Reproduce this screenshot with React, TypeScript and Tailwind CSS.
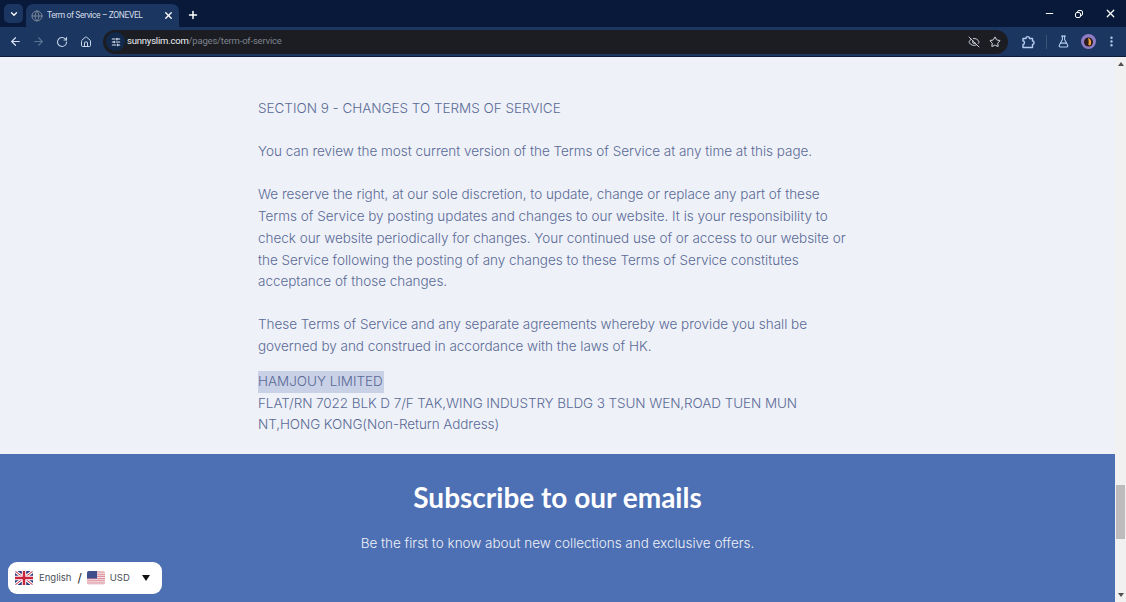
import React from "react";
import { ArrowLeft, ArrowRight, RotateCw, Home, X, Plus, ChevronDown, Star, EyeOff, FlaskConical, EllipsisVertical, Minus, SlidersHorizontal, Globe } from "lucide-react";

const lines = (a: string[]) => a.map((l, i) => <div key={i}>{l}</div>);

function UK() {
  return (
    <svg width="18" height="14" viewBox="0 0 18 14" className="rounded-[2px]">
      <rect width="18" height="14" fill="#2b3a7a" />
      <path d="M0 0L18 14M18 0L0 14" stroke="#fff" strokeWidth="3" />
      <path d="M0 0L18 14M18 0L0 14" stroke="#c8243c" strokeWidth="1" />
      <path d="M9 0V14M0 7H18" stroke="#fff" strokeWidth="4.5" />
      <path d="M9 0V14M0 7H18" stroke="#c8243c" strokeWidth="2.5" />
    </svg>
  );
}
function US() {
  return (
    <svg width="18" height="14" viewBox="0 0 18 14" className="rounded-[2px]">
      <rect width="18" height="14" fill="#f3e3e6" />
      <path d="M0 1H18M0 3.2H18M0 5.4H18M0 7.6H18M0 9.8H18M0 12H18" stroke="#dd8e9a" strokeWidth="1.1" />
      <rect width="10" height="7.5" fill="#3f4f8c" />
    </svg>
  );
}
function ExtIcon() {
  return (
    <svg width="14" height="14" viewBox="0 0 14 14" fill="none" stroke="#b4cbed" strokeWidth="1.4" strokeLinejoin="round" className="ml-[13px] shrink-0">
      <path d="M2 3.5H5C5 1 8.5 1 8.5 3.5H11.5V6C13.6 6 13.6 9.5 11.5 9.5V12.5H2V9.5C4 9.5 4 6 2 6Z" />
    </svg>
  );
}
function Avatar() {
  return (
    <svg width="15" height="15" viewBox="0 0 15 15" className="ml-[11px] shrink-0">
      <circle cx="7.5" cy="7.5" r="7.5" fill="#8f7cc4" />
      <circle cx="7.5" cy="8" r="4.5" fill="#2d1c1a" />
      <path d="M7 4C10 5 11 8 9.5 11C8.5 12 7 11.5 7.5 9.5C8 8 7.5 6 7 4Z" fill="#f0a23c" />
    </svg>
  );
}

export default function App() {
  return (
    <div className="w-[1126px] h-[602px] overflow-hidden flex flex-col relative bg-[#eef1f8] font-['Liberation_Sans',sans-serif]">
      {/* Tab strip */}
      <div className="h-[27px] shrink-0 bg-[#08193a] flex items-end font-['Roboto',sans-serif]">
        <div className="w-[19px] h-[19px] ml-[4px] mb-[4px] rounded-[5px] bg-[#1a3661] flex items-center justify-center text-white">
          <ChevronDown size={10} strokeWidth={3} />
        </div>
        <div className="ml-[3px] w-[153px] h-[23px] rounded-t-[7px] bg-[#1a3661] flex items-center pl-[5px] pr-[5px] text-[#d5dce8]">
          <Globe size={12} className="text-[#7c8798] shrink-0" />
          <span className="ml-[4px] text-[8.5px] tracking-[-0.4px] whitespace-nowrap flex-1">Term of Service – ZONEVEL</span>
          <X size={11} strokeWidth={3} className="text-white shrink-0" />
        </div>
        <Plus size={12} strokeWidth={3} className="text-white ml-[8px] mb-[6px]" />
        <div className="flex-1" />
        <div className="flex items-center h-[27px] text-white">
          <Minus size={11} strokeWidth={2.5} className="mr-[20px]" />
          <div className="relative w-[8px] h-[8px] mr-[21px]">
            <div className="absolute right-0 top-0 w-[6px] h-[6px] rounded-[2px] border border-white" />
            <div className="absolute left-0 bottom-0 w-[6px] h-[6px] rounded-[2px] border-[1.5px] border-white bg-[#08193a]" />
          </div>
          <X size={13} strokeWidth={2.2} className="mr-[9px]" />
        </div>
      </div>
      {/* Toolbar */}
      <div className="h-[30px] shrink-0 bg-[#1a3661] flex items-center text-[#c9d6ea] border-b border-[#0c1c3a]">
        <ArrowLeft size={13} strokeWidth={2.2} className="ml-[9px] text-[#d4e0f2] shrink-0" />
        <ArrowRight size={13} strokeWidth={2} className="ml-[10px] text-[#5d7394] shrink-0" />
        <RotateCw size={12} strokeWidth={2.2} className="ml-[11px] shrink-0" />
        <Home size={12} strokeWidth={2} className="ml-[12px] shrink-0" />
        <div className="ml-[11px] w-[905px] shrink-0 h-[24px] rounded-full bg-[#1b1d22] flex items-center font-['Roboto',sans-serif] text-[9.5px] tracking-[-0.2px]">
          <div className="ml-[3px] w-[19px] h-[19px] rounded-full bg-[#12294c] flex items-center justify-center text-[#dbe5f3]">
            <SlidersHorizontal size={10} strokeWidth={2.5} />
          </div>
          <span className="ml-[2px] text-[#eef1f6]">sunnyslim.com</span>
          <span className="text-[#7d838d]">/pages/term-of-service</span>
          <div className="flex-1" />
          <EyeOff size={12} className="text-[#c8ccd2] mr-[9px]" />
          <Star size={12} strokeWidth={2} className="text-[#dfe3e9] mr-[7px]" />
        </div>
        <ExtIcon />
        <div className="w-px h-[14px] bg-[#3a5478] ml-[11px] shrink-0" />
        <FlaskConical size={13} strokeWidth={2} className="ml-[10px] text-[#b4cbed] shrink-0" />
        <Avatar />
        <EllipsisVertical size={13} strokeWidth={2.5} className="ml-[9px] text-[#b4cbed] shrink-0" />
      </div>
      {/* Viewport */}
      <div className="flex-1 min-h-0 flex">
        <div className="flex-1 min-w-0 flex flex-col">
          <div className="h-[397px] shrink-0 pl-[258px] pt-[41px] text-[#5a6a96] text-[13.5px] font-light leading-[21.7px] tracking-[-0.02px] font-['Inter',sans-serif]">
            <div>SECTION 9 - CHANGES TO TERMS OF SERVICE</div>
            <div className="mt-[21.5px]">You can review the most current version of the Terms of Service at any time at this page.</div>
            <div className="mt-[21.5px]">
              {lines([
                "We reserve the right, at our sole discretion, to update, change or replace any part of these",
                "Terms of Service by posting updates and changes to our website. It is your responsibility to",
                "check our website periodically for changes. Your continued use of or access to our website or",
                "the Service following the posting of any changes to these Terms of Service constitutes",
                "acceptance of those changes.",
              ])}
            </div>
            <div className="mt-[21.5px]">
              {lines([
                "These Terms of Service and any separate agreements whereby we provide you shall be",
                "governed by and construed in accordance with the laws of HK.",
              ])}
            </div>
            <div className="mt-[13px]">
              <span className="bg-[#c9d1e6] inline-block pr-[1px]">HAMJOUY LIMITED</span>
            </div>
            <div className="tracking-[-0.08px]">
              {lines(["FLAT/RN 7022 BLK D 7/F TAK,WING INDUSTRY BLDG 3 TSUN WEN,ROAD TUEN MUN", "NT,HONG KONG(Non-Return Address)"])}
            </div>
          </div>
          <div className="flex-1 bg-[#4d6fb3] flex flex-col items-center text-white">
            <div className="mt-[24px] text-[28px] leading-[38px] font-bold font-['Lato',sans-serif]">Subscribe to our emails</div>
            <div className="mt-[17px] text-[13.5px] font-light leading-[21px] tracking-[-0.02px] text-[#eef1f8] font-['Inter',sans-serif]">Be the first to know about new collections and exclusive offers.</div>
          </div>
        </div>
        {/* Scrollbar */}
        <div className="w-[11px] shrink-0 bg-[#f2f1f1] flex flex-col items-center">
          <div className="mt-[5px] w-0 h-0 border-x-[3px] border-x-transparent border-b-[4px] border-b-[#505050]" />
          <div className="mt-[419px] w-[9px] h-[54px] bg-[#bdbbbb]" />
          <div className="flex-1" />
          <div className="mb-[5px] w-0 h-0 border-x-[3px] border-x-transparent border-t-[4px] border-t-[#505050]" />
        </div>
      </div>
      {/* Language widget */}
      <div className="absolute left-[8px] top-[562px] w-[154px] h-[32px] rounded-[9px] bg-white flex items-center text-[#4a4f57] text-[9.5px] font-['Inter',sans-serif]">
        <div className="ml-[7px] flex"><UK /></div>
        <span className="ml-[6px]">English</span>
        <span className="ml-[6px] text-[#222] text-[12px]">/</span>
        <div className="ml-[5px] flex"><US /></div>
        <span className="ml-[5px]">USD</span>
        <div className="ml-[12px] w-0 h-0 border-x-[4px] border-x-transparent border-t-[6px] border-t-[#111]" />
      </div>
    </div>
  );
}
